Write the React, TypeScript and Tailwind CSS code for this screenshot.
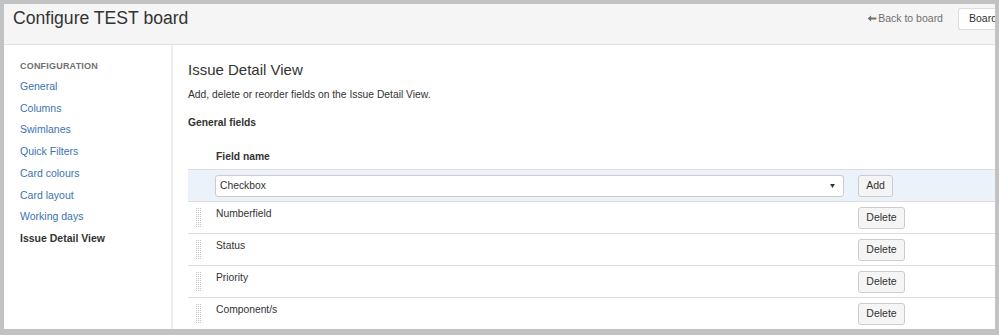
import React from 'react'

const navItems = [
  'General',
  'Columns',
  'Swimlanes',
  'Quick Filters',
  'Card colours',
  'Card layout',
  'Working days',
]

const fields = ['Numberfield', 'Status', 'Priority', 'Component/s']

function DragHandle() {
  const dots = []
  for (let y = 0; y < 10; y++) {
    for (let x = 0; x < 3; x++) {
      dots.push(<rect key={`${x}-${y}`} x={x * 2} y={y * 2} width="1" height="1" />)
    }
  }
  return (
    <svg width="6" height="20" viewBox="0 0 6 20" className="fill-[#c4c4c4]">
      {dots}
    </svg>
  )
}

export default function App() {
  return (
    <div className="w-[999px] h-[335px] bg-[#c2c2c2] pt-[4px] pl-[4px] pr-[4px] pb-[6px] font-['Liberation_Sans',Arial,sans-serif] text-[#333]">
      <div className="h-full bg-white flex flex-col overflow-hidden">
        {/* Header */}
        <div className="h-[41px] shrink-0 bg-[#f5f5f5] border-b border-[#e1e1e1] flex items-center justify-between pl-[9px] pb-[11px] overflow-hidden">
          <h1 className="text-[17.6px] leading-none text-[#333]">Configure TEST board</h1>
          <div className="flex items-center gap-[15px] mr-[-22px]">
            <a className="flex items-center gap-[1px] text-[10.5px] text-[#707070]">
              <svg width="10" height="7" viewBox="0 0 10 8" className="fill-[#707070]">
                <path d="M0 4 L4 0.5 L4 2.8 L10 2.8 L10 5.2 L4 5.2 L4 7.5 Z" />
              </svg>
              Back to board
            </a>
            <button className="h-[22px] pl-[10px] pr-[20px] text-[10.5px] text-[#333] bg-white border border-r-0 border-[#ddd] rounded-l-[3px]">
              Board
            </button>
          </div>
        </div>

        <div className="flex flex-1 min-h-0">
          {/* Sidebar */}
          <div className="w-[169px] shrink-0 border-r-2 border-[#eeeeee] pl-[16px] pt-[14px]">
            <div className="text-[9px] font-bold tracking-[0.2px] text-[#707070] leading-[14px] mb-[3px]">CONFIGURATION</div>
            <ul className="flex flex-col">
              {navItems.map((n) => (
                <li key={n} className="text-[10.5px] leading-[21.7px] text-[#3b73af]">
                  {n}
                </li>
              ))}
              <li className="text-[10.5px] leading-[21.7px] font-bold text-[#333]">Issue Detail View</li>
            </ul>
          </div>

          {/* Main */}
          <div className="flex-1 pl-[15px] pt-[15px]">
            <h2 className="text-[15px] leading-[20px] text-[#333]">Issue Detail View</h2>
            <p className="text-[10.3px] leading-[14px] mt-[8px] text-[#333]">
              Add, delete or reorder fields on the Issue Detail View.
            </p>
            <h3 className="text-[10.3px] leading-[14px] font-bold mt-[14px] text-[#333]">General fields</h3>

            <div className="mt-[15px]">
              <div className="h-[25px] flex items-center border-b border-[#ddd] pl-[28px] text-[10.3px] font-bold">
                Field name
              </div>
              <div className="h-[32px] flex items-center bg-[#ebf2f9] border-b border-[#ddd] pl-[27px]">
                <div className="w-[629px] h-[22px] bg-white border border-[#ccc] rounded-[3px] flex items-center justify-between pl-[4px] pr-[8px] text-[10.3px]">
                  <span>Checkbox</span>
                  <svg width="5" height="4" viewBox="0 0 6 5" className="fill-[#333]">
                    <path d="M0 0 L6 0 L3 5 Z" />
                  </svg>
                </div>
                <button className="ml-[14px] h-[22px] w-[35px] bg-[#f5f5f5] border border-[#ccc] rounded-[3px] text-[10.5px] text-[#333]">
                  Add
                </button>
              </div>
              {fields.map((f) => (
                <div key={f} className="h-[32px] flex items-center border-b border-[#ddd]">
                  <div className="w-[28px] flex justify-start pl-[8px]">
                    <DragHandle />
                  </div>
                  <span className="w-[642px] text-[10.3px] pb-[8px]">{f}</span>
                  <button className="h-[22px] w-[47px] bg-[#f5f5f5] border border-[#ccc] rounded-[3px] text-[10.5px] text-[#333]">
                    Delete
                  </button>
                </div>
              ))}
            </div>
          </div>
        </div>
      </div>
    </div>
  )
}
